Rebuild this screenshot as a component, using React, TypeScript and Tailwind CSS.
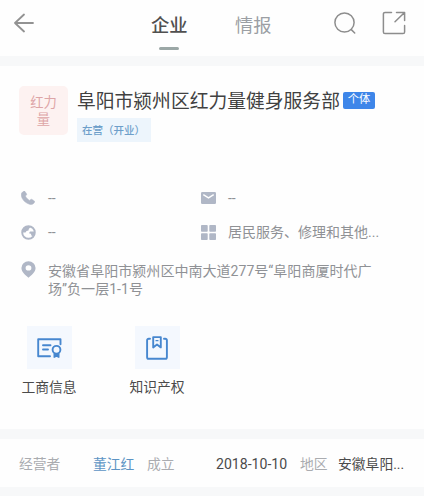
import type { ReactNode } from 'react';

function BackIcon() {
  return (
    <svg width="20" height="20" viewBox="0 0 20 20" fill="none" stroke="#929292" strokeWidth="1.8" strokeLinecap="round" strokeLinejoin="round">
      <path d="M19 10H1M10 1.5L1 10l9 8.5" />
    </svg>
  );
}

function SearchIcon() {
  return (
    <svg width="22" height="22" viewBox="0 0 22 22" fill="none" stroke="#8d8d8d" strokeWidth="1.5" strokeLinecap="round">
      <circle cx="10.5" cy="10.5" r="9.6" />
      <path d="M17.3 17.6l3.4 3.4" />
    </svg>
  );
}

function ShareIcon() {
  return (
    <svg width="24" height="24" viewBox="0 0 24 24" fill="none" stroke="#8d8d8d" strokeWidth="1.5" strokeLinecap="round" strokeLinejoin="round">
      <path d="M9.5 1.4H3a1.6 1.6 0 0 0-1.6 1.6v18A1.6 1.6 0 0 0 3 22.6h18a1.6 1.6 0 0 0 1.6-1.6v-6.5" />
      <path d="M14.5 1.4H22.6V9.5M22.3 1.7L13 10.8" />
    </svg>
  );
}

function PhoneIcon() {
  return (
    <svg width="14" height="14" viewBox="0 0 14 14" fill="#b0b7c6" stroke="#b0b7c6" strokeWidth=".5">
      <path d="M2.6.3c.5-.4 1-.3 1.4.2l1.5 2.3c.3.5.2 1-.2 1.4l-.9.8c.8 1.8 2.3 3.4 4.3 4.4l1-.9c.4-.4.9-.4 1.3-.1l2.3 1.500c.5.4.6.9.2 1.400-1 1.700-2.400 2.500-4.400 2.100C4.400 12.300.7 8.300.2 4.300 0 2.500 1.100 1.100 2.600.3z" />
    </svg>
  );
}

function GlobeIcon() {
  return (
    <svg width="15" height="15" viewBox="0 0 15 15">
      <circle cx="7.5" cy="7.5" r="6.3" fill="#fff" stroke="#b0b7c6" strokeWidth="1.9" />
      <path d="M1.500 5L5 1.500h5L7.800 4 7.500 5.500l-2 .5-1 1.500H1.500zM9 6.500h4.800L13 10l-2 1.500L9.800 8.800 8 8.300z" fill="#b0b7c6" />
    </svg>
  );
}

function PinIcon() {
  return (
    <svg width="15" height="17" viewBox="0 0 14 17" preserveAspectRatio="none">
      <path d="M7 .3a6.600 6.600 0 0 0-6.600 6.600c0 4.300 4 7.200 6.600 9.800 2.600-2.600 6.600-5.500 6.600-9.800A6.600 6.600 0 0 0 7 .3zM7 4.200a2.700 2.700 0 1 1 0 5.400 2.700 2.700 0 0 1 0-5.400z" fill="#b0b7c6" fillRule="evenodd" />
    </svg>
  );
}

function MailIcon() {
  return (
    <svg width="15" height="12" viewBox="0 0 15 12">
      <rect width="15" height="12" rx="1.3" fill="#b0b7c6" />
      <path d="M2.300 2.700L7.500 5.900l5.200-3.200" fill="none" stroke="#fff" strokeWidth="1.4" />
    </svg>
  );
}

function GridIcon() {
  return (
    <svg width="15" height="15" viewBox="0 0 15 15" fill="#b0b7c6">
      <rect width="6.7" height="6.7" rx=".8" />
      <rect x="8.3" width="6.7" height="6.7" rx=".8" />
      <rect y="8.3" width="6.7" height="6.7" rx=".8" />
      <rect x="8.3" y="8.3" width="6.7" height="6.7" rx=".8" />
    </svg>
  );
}

function CertificateIcon() {
  return (
    <svg width="25" height="20" viewBox="0 0 25 20" fill="none" stroke="#4787cf" strokeWidth="1.9" strokeLinecap="round" strokeLinejoin="round">
      <path d="M13 18.200H1.200V1.200h22.300v5M6 7.300h7.500M6 11.500h5" />
      <circle cx="19.5" cy="11.8" r="3.9" />
      <path d="M17.200 15.900v3.300l2.300-1 2.300 1v-3.300" fill="#4787cf" strokeWidth="1.4" />
    </svg>
  );
}

function BookmarkIcon() {
  return (
    <svg width="22" height="24" viewBox="0 0 22 24" fill="none" stroke="#4787cf" strokeWidth="1.9" strokeLinejoin="round" strokeLinecap="round">
      <path d="M4 2.700H2.700A1.600 1.600 0 0 0 1.100 4.300v16.900a1.600 1.600 0 0 0 1.600 1.600h16.600a1.600 1.600 0 0 0 1.600-1.600V4.300a1.600 1.600 0 0 0-1.600-1.600H18" />
      <path d="M7.200 1.100h7.600v10.300L11 8.500l-3.800 2.900z" />
      <path d="M10 4.700h2" strokeWidth="1.2" />
    </svg>
  );
}

function Detail({ icon, children }: { icon: ReactNode; children: ReactNode }) {
  return (
    <div className="flex h-[34px] items-center">
      <span className="flex w-[27px] shrink-0">{icon}</span>
      <span className="pt-px">{children}</span>
    </div>
  );
}

function Shortcut({ icon, label }: { icon: ReactNode; label: string }) {
  return (
    <div className="flex w-14 flex-col items-center">
      <div className="flex h-[43px] w-[45px] items-center justify-center bg-[#f4f8fe]">{icon}</div>
      <span className="mt-2 text-[13.8px] leading-5 text-[#4b4b4b]">{label}</span>
    </div>
  );
}

export default function App() {
  return (
    <div className="flex h-[496px] w-[424px] flex-col overflow-hidden whitespace-nowrap bg-[#f7f8f9] font-[Roboto,'Noto_Sans_CJK_SC',sans-serif]">
      <header className="flex h-14 shrink-0 bg-[#fefefe] pl-3.5">
        <div className="flex w-[137px] pt-[13px]"><BackIcon /></div>
        <div className="flex w-[84px] flex-col pt-3.5">
          <span className="text-[18.3px] font-medium leading-6 text-[#505050]">企业</span>
          <span className="ml-2 mt-[9px] h-[2.5px] w-5 rounded-full bg-[#9ba7a6]" />
        </div>
        <span className="w-[99px] pt-3.5 text-[18.3px] leading-6 text-[#9b9fa4]">情报</span>
        <div className="w-12 pt-3"><SearchIcon /></div>
        <div className="pt-[11px]"><ShareIcon /></div>
      </header>

      <main className="mt-[10px] flex h-[363px] shrink-0 flex-col bg-[#fefefe] pl-[19px] pt-5">
        <section className="flex">
          <div className="flex h-[49px] w-[49px] items-center justify-center rounded-[5px] bg-[#fdf2f1] pt-0.5 text-center text-[13.3px] leading-[16.5px] text-[#dda5a7]">
            <span>红力<br />量</span>
          </div>
          <div className="ml-[9px]">
            <div className="flex h-7 items-center">
              <h1 className="pt-[3px] text-[18.8px] leading-7 text-[#414141]">阜阳市颍州区红力量健身服务部</h1>
              <span className="ml-[3px] flex h-[17px] w-[32px] items-center justify-center rounded-[2px] bg-[#3e86e9] text-[11.3px] leading-none text-white">个体</span>
            </div>
            <span className="mt-1 flex h-6 w-[74px] items-center bg-[#edf5fc] pl-[5px] pt-0.5 text-[10.5px] font-medium leading-none text-[#6e9fca]">在营（开业）</span>
          </div>
        </section>

        <section className="mt-[39px] text-[14px] leading-[17.5px] text-[#8f9195]">
          <div className="grid grid-cols-[180px_1fr] pl-0.5">
            <Detail icon={<PhoneIcon />}>--</Detail>
            <Detail icon={<MailIcon />}>--</Detail>
            <Detail icon={<GlobeIcon />}>--</Detail>
            <Detail icon={<GridIcon />}>居民服务、修理和其他...</Detail>
          </div>
          <div className="mt-3 flex pl-0.5">
            <span className="w-[27px]"><PinIcon /></span>
            <p className="pt-0.5 text-[14.05px]">安徽省阜阳市颍州区中南大道277号“阜阳商厦时代广<br />场”负一层1-1号</p>
          </div>
        </section>

        <section className="mt-7 flex gap-[52px] pl-0.5">
          <Shortcut icon={<CertificateIcon />} label="工商信息" />
          <Shortcut icon={<BookmarkIcon />} label="知识产权" />
        </section>
      </main>

      <footer className="mt-[10px] flex h-12 shrink-0 items-center bg-[#fefefe] pl-[19px] pt-0.5 text-[13.8px] leading-5">
        <span className="w-[74px] text-[#aaacb0]">经营者</span>
        <span className="w-[54px] text-[#5c94c4]">董江红</span>
        <span className="w-[69px] text-[#aaacb0]">成立</span>
        <span className="w-[84px] text-[14.1px] text-[#4b4b4b]">2018-10-10</span>
        <span className="w-[38px] text-[#aaacb0]">地区</span>
        <span className="text-[#4b4b4b]">安徽阜阳...</span>
      </footer>
    </div>
  );
}
